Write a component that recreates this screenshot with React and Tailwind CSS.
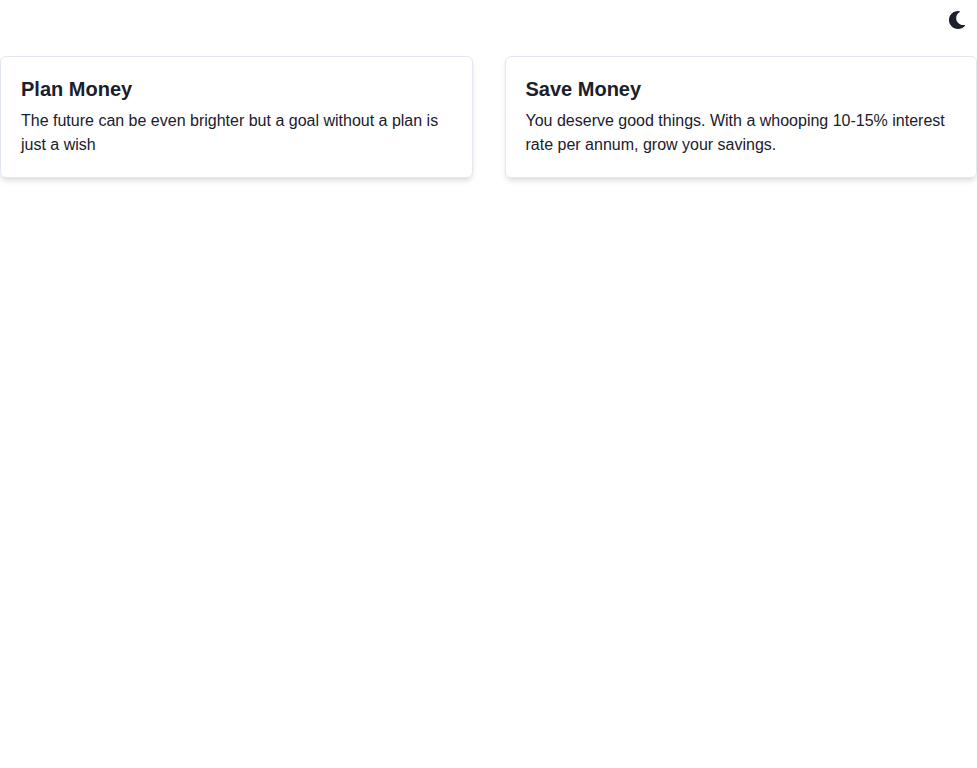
import { FaMoon } from "react-icons/fa";

const features = [
  {
    title: "Plan Money",
    desc: "The future can be even brighter but a goal without a plan is just a wish",
  },
  {
    title: "Save Money",
    desc: "You deserve good things. With a whooping 10-15% interest rate per annum, grow your savings.",
  },
];

function Feature({ title, desc }) {
  return (
    <div className="flex-1 rounded-md border border-[#e2e8f0] p-5 shadow-[0_4px_6px_-1px_rgba(0,0,0,0.1),0_2px_4px_-1px_rgba(0,0,0,0.06)]">
      <h2 className="text-xl leading-6 font-bold">{title}</h2>
      <p className="mt-2 text-base leading-6">{desc}</p>
    </div>
  );
}

export default function App() {
  return (
    <div className="min-h-screen bg-white font-[Helvetica,Arial,'Liberation_Sans',sans-serif] text-[#1a202c] antialiased [text-rendering:optimizeLegibility]">
      <header className="flex h-10 justify-end">
        <button
          type="button"
          aria-label="Switch to dark mode"
          className="flex h-10 w-10 items-center justify-center rounded-md"
        >
          <FaMoon className="h-[18px] w-[18px]" />
        </button>
      </header>
      <main className="mt-4 flex gap-8">
        {features.map((f) => (
          <Feature key={f.title} {...f} />
        ))}
      </main>
    </div>
  );
}
